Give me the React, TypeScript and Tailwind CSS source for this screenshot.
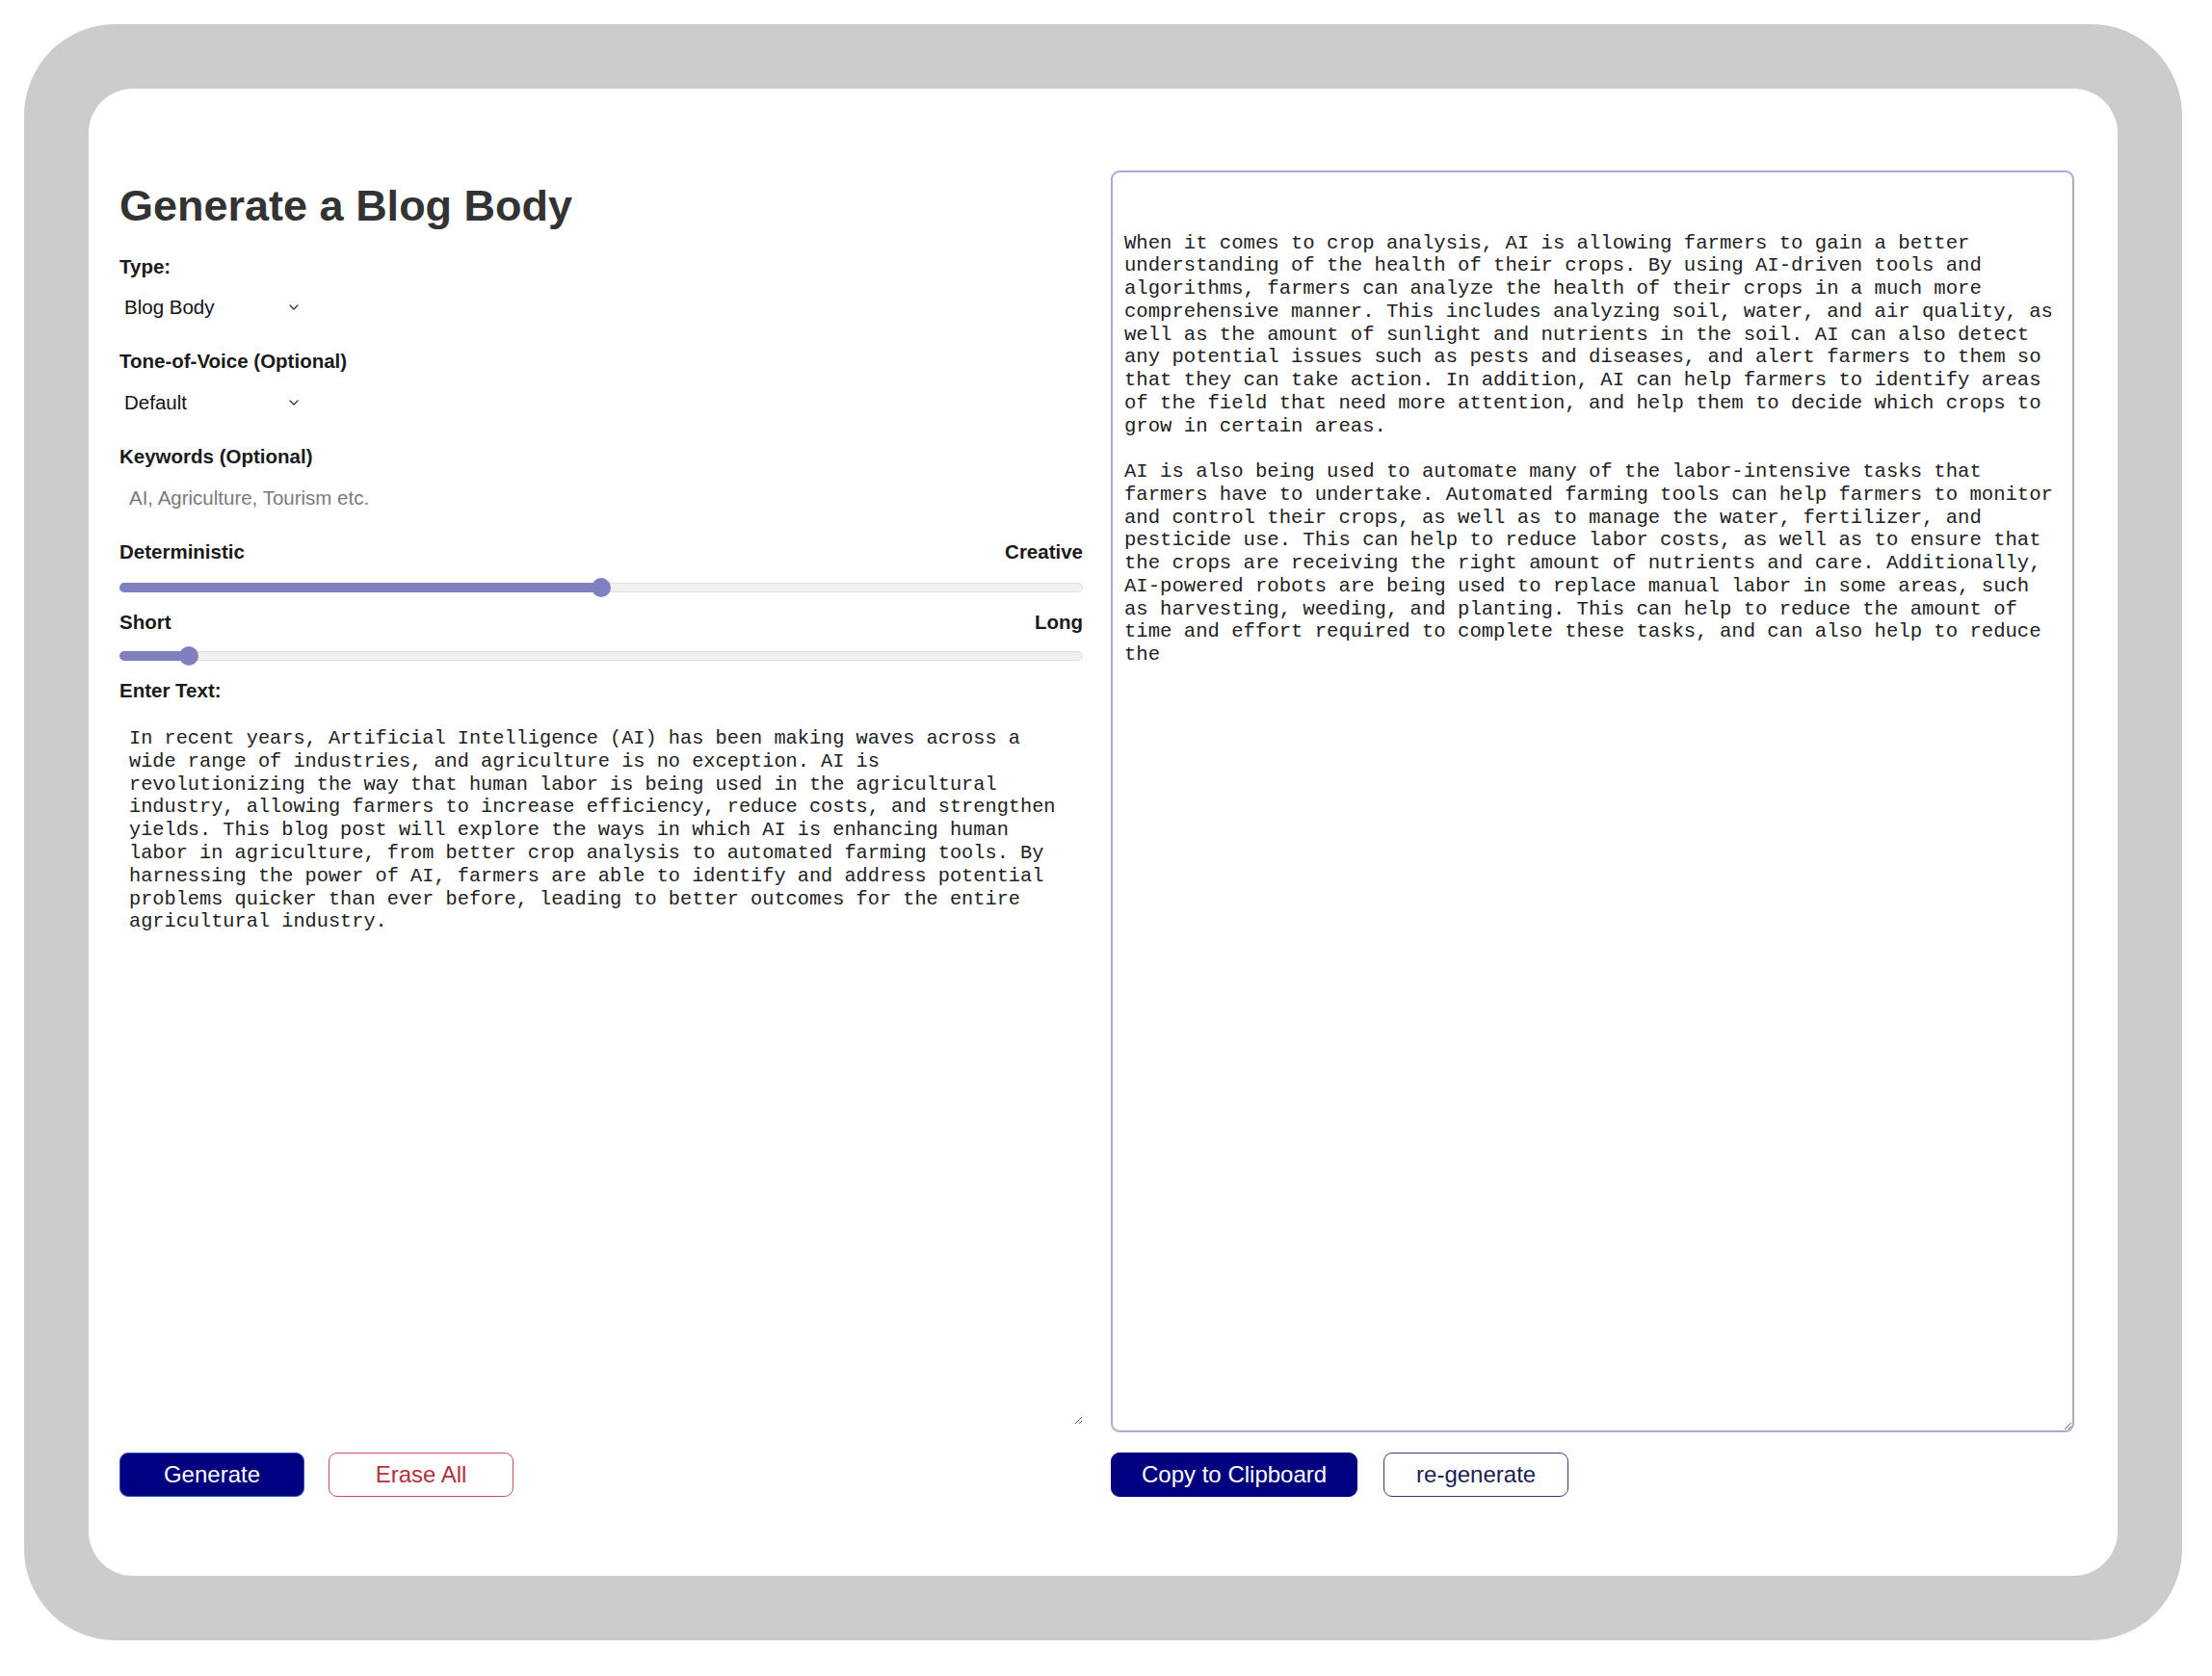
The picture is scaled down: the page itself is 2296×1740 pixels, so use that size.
import React from "react";

const leftText = `In recent years, Artificial Intelligence (AI) has been making waves across a
wide range of industries, and agriculture is no exception. AI is
revolutionizing the way that human labor is being used in the agricultural
industry, allowing farmers to increase efficiency, reduce costs, and strengthen
yields. This blog post will explore the ways in which AI is enhancing human
labor in agriculture, from better crop analysis to automated farming tools. By
harnessing the power of AI, farmers are able to identify and address potential
problems quicker than ever before, leading to better outcomes for the entire
agricultural industry.`;

const rightText = `

When it comes to crop analysis, AI is allowing farmers to gain a better
understanding of the health of their crops. By using AI-driven tools and
algorithms, farmers can analyze the health of their crops in a much more
comprehensive manner. This includes analyzing soil, water, and air quality, as
well as the amount of sunlight and nutrients in the soil. AI can also detect
any potential issues such as pests and diseases, and alert farmers to them so
that they can take action. In addition, AI can help farmers to identify areas
of the field that need more attention, and help them to decide which crops to
grow in certain areas.

AI is also being used to automate many of the labor-intensive tasks that
farmers have to undertake. Automated farming tools can help farmers to monitor
and control their crops, as well as to manage the water, fertilizer, and
pesticide use. This can help to reduce labor costs, as well as to ensure that
the crops are receiving the right amount of nutrients and care. Additionally,
AI-powered robots are being used to replace manual labor in some areas, such
as harvesting, weeding, and planting. This can help to reduce the amount of
time and effort required to complete these tasks, and can also help to reduce
the`;

function Chevron() {
  return (
    <svg width="12" height="8" viewBox="0 0 12 8" className="shrink-0">
      <path d="M2 2 L6 6 L10 2" fill="none" stroke="#333" strokeWidth="1.3" strokeLinecap="round" strokeLinejoin="round" />
    </svg>
  );
}

function Select({ value }: { value: string }) {
  return (
    <div className="flex h-[24px] w-[192px] items-center justify-between pl-[5px] pr-[5px] text-[20.5px] leading-[24px] text-[#111]">
      <span>{value}</span>
      <Chevron />
    </div>
  );
}

function Slider({ value }: { value: number }) {
  const center = 10 + 980 * value;
  return (
    <div className="relative h-[20px] w-full">
      <div className="absolute left-0 right-0 top-[5px] h-[10px] rounded-full border border-[#dedede] bg-[#f0f0f0]" />
      <div
        className="absolute left-0 top-[5px] h-[10px] rounded-full bg-[#8080c0]"
        style={{ width: center }}
      />
      <div
        className="absolute top-0 h-[20px] w-[20px] rounded-full bg-[#8080c0]"
        style={{ left: center - 10 }}
      />
    </div>
  );
}

export default function App() {
  return (
    <div className="min-h-[1740px] w-[2296px] bg-white pl-[25px] pt-[25px]" style={{ fontFamily: '"Liberation Sans", Arial, sans-serif' }}>
      <div className="h-[1678px] w-[2240px] rounded-[95px] bg-[#cccccc] p-[67px]">
        <div className="h-full w-full rounded-[46px] bg-white pl-[32px] pr-[45px] pt-[85px]">
          <div className="grid h-[1377px] grid-cols-[1000px_1000px] gap-x-[29px]">
            {/* Left column */}
            <div className="flex min-h-0 flex-col">
              <h1 className="mt-[11px] text-[45px] font-bold leading-[52px] text-[#333333]">Generate a Blog Body</h1>
              <div className="mt-[25px] text-[20.5px] font-bold leading-[24px] text-[#1a1a1a]">Type:</div>
              <div className="mt-[18px]">
                <Select value="Blog Body" />
              </div>
              <div className="mt-[32px] text-[20.5px] font-bold leading-[24px] text-[#1a1a1a]">Tone-of-Voice (Optional)</div>
              <div className="mt-[19px]">
                <Select value="Default" />
              </div>
              <div className="mt-[32px] text-[20.5px] font-bold leading-[24px] text-[#1a1a1a]">Keywords (Optional)</div>
              <input
                className="mt-[19px] h-[24px] w-[500px] pl-[10px] text-[20.5px] leading-[24px] text-[#111] outline-none placeholder:text-[#7a7a7a]"
                placeholder="AI, Agriculture, Tourism etc."
              />
              <div className="mt-[32px] flex justify-between text-[20.5px] font-bold leading-[24px] text-[#1a1a1a]">
                <span>Deterministic</span>
                <span>Creative</span>
              </div>
              <div className="mt-[15px]">
                <Slider value={0.5} />
              </div>
              <div className="mt-[14px] flex justify-between text-[20.5px] font-bold leading-[24px] text-[#1a1a1a]">
                <span>Short</span>
                <span>Long</span>
              </div>
              <div className="mt-[13px]">
                <Slider value={0.063} />
              </div>
              <div className="mt-[14px] text-[20.5px] font-bold leading-[24px] text-[#1a1a1a]">Enter Text:</div>
              <textarea
                readOnly
                value={leftText}
                className="mt-[12px] min-h-0 w-full flex-1 resize border-0 bg-white pl-[10px] pr-[4px] pt-[14px] text-[20.3px] leading-[23.8px] text-[#222] outline-none"
                style={{ fontFamily: '"Liberation Mono", "Courier New", monospace' }}
              />
              <div className="mt-[29px] flex gap-[25px]">
                <button className="h-[46px] w-[192px] rounded-[9px] border border-[#2855b8] bg-[#000080] text-[24px] text-white">
                  Generate
                </button>
                <button className="h-[46px] w-[192px] rounded-[9px] border border-[#c5505c] bg-white text-[24px] text-[#b3303c]">
                  Erase All
                </button>
              </div>
            </div>
            {/* Right column */}
            <div className="flex min-h-0 flex-col">
              <textarea
                readOnly
                value={rightText}
                className="min-h-0 w-full flex-1 resize rounded-[9px] border-2 border-[#a9a9d2] bg-white pl-[12px] pr-[4px] py-[14px] text-[20.6px] leading-[23.75px] text-[#222] outline-none"
                style={{ fontFamily: '"Liberation Mono", "Courier New", monospace' }}
              />
              <div className="mt-[21px] flex gap-[27px]">
                <button className="h-[46px] rounded-[9px] border border-[#000080] bg-[#000080] px-[31px] text-[24px] text-white">
                  Copy to Clipboard
                </button>
                <button className="h-[46px] w-[192px] rounded-[9px] border border-[#3a3a7a] bg-white text-[24px] text-[#1c1c55]">
                  re-generate
                </button>
              </div>
            </div>
          </div>
        </div>
      </div>
    </div>
  );
}
